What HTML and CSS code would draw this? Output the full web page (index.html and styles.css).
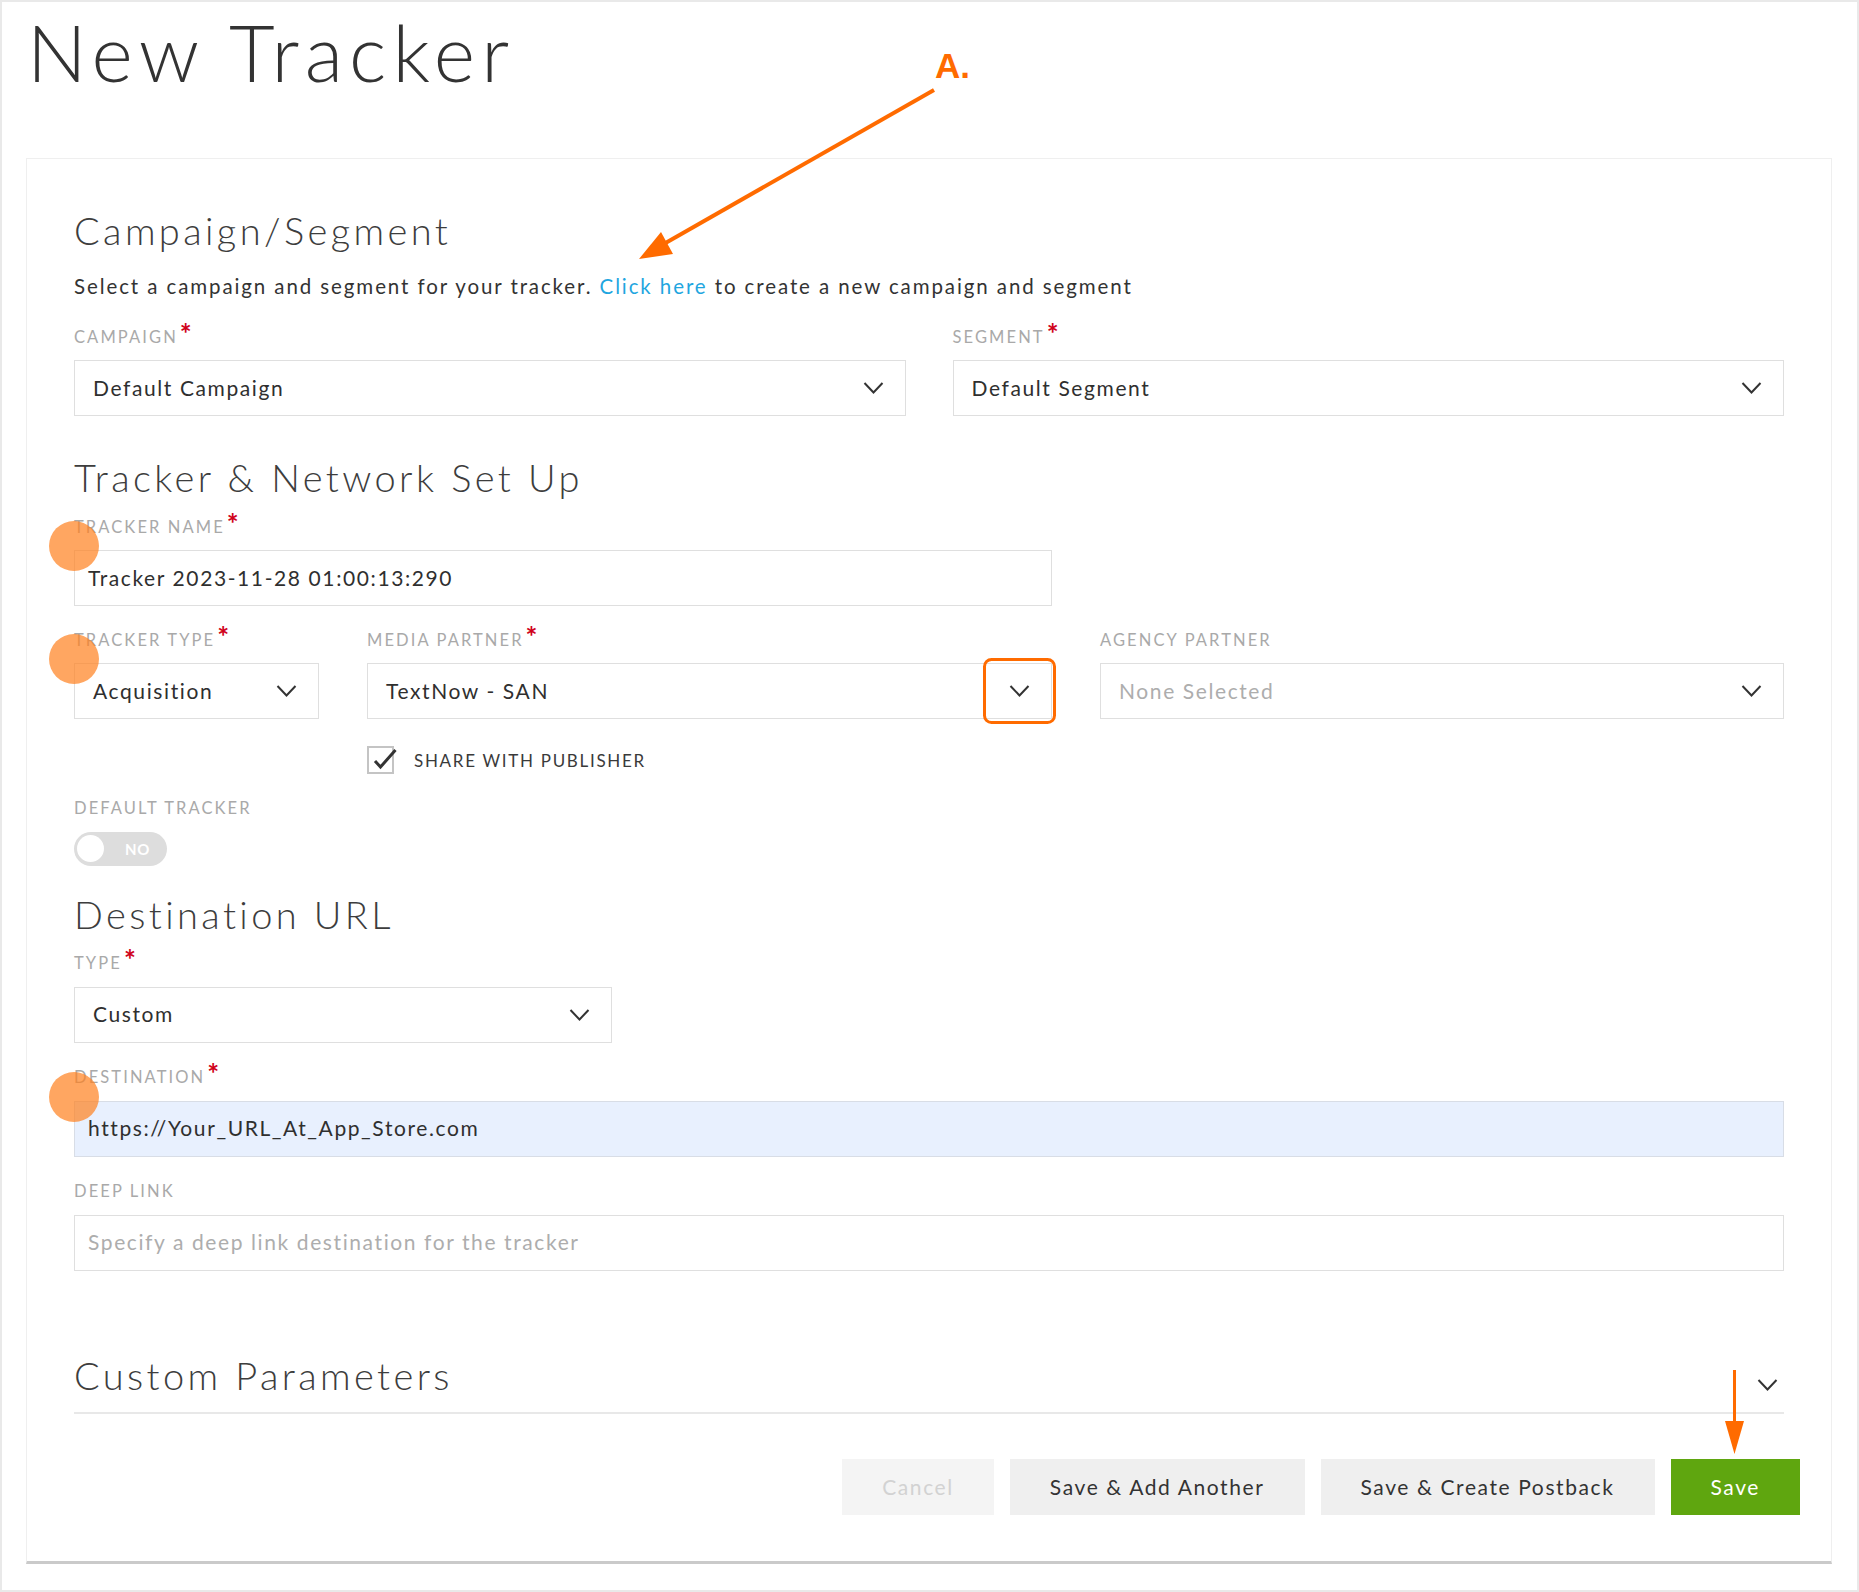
FILE: index.html
```html
<!DOCTYPE html>
<html lang="en">
<head>
<meta charset="utf-8">
<title>New Tracker</title>
<link rel="stylesheet" href="styles.css">
</head>
<body>
<div class="frame">
  <h1 class="page-title">New Tracker</h1>
  <div class="card">
    <section class="sec">
      <h2 class="sec-title">Campaign/Segment</h2>
      <p class="sec-desc">Select a campaign and segment for your tracker. <a href="#" class="link">Click here</a> to create a new campaign and segment</p>
      <div class="row-two">
        <div class="field">
          <div class="lbl">Campaign<span class="req">*</span></div>
          <div class="select"><span class="val">Default Campaign</span><svg class="chev" viewBox="0 0 20 12"><polyline points="1,1 10,10.5 19,1"/></svg></div>
        </div>
        <div class="field">
          <div class="lbl">Segment<span class="req">*</span></div>
          <div class="select"><span class="val">Default Segment</span><svg class="chev" viewBox="0 0 20 12"><polyline points="1,1 10,10.5 19,1"/></svg></div>
        </div>
      </div>
    </section>

    <section class="sec sec-tracker">
      <h2 class="sec-title">Tracker &amp; Network Set Up</h2>
      <div class="field field-name">
        <div class="lbl">Tracker Name<span class="req">*</span></div>
        <div class="input"><span class="val">Tracker 2023-11-28 01:00:13:290</span></div>
      </div>
      <div class="grid3">
        <div class="field">
          <div class="lbl">Tracker Type<span class="req">*</span></div>
          <div class="select"><span class="val">Acquisition</span><svg class="chev" viewBox="0 0 20 12"><polyline points="1,1 10,10.5 19,1"/></svg></div>
        </div>
        <div class="field">
          <div class="lbl">Media Partner<span class="req">*</span></div>
          <div class="select"><span class="val">TextNow - SAN</span><svg class="chev" viewBox="0 0 20 12"><polyline points="1,1 10,10.5 19,1"/></svg></div>
        </div>
        <div class="field">
          <div class="lbl">Agency Partner</div>
          <div class="select"><span class="val placeholder">None Selected</span><svg class="chev" viewBox="0 0 20 12"><polyline points="1,1 10,10.5 19,1"/></svg></div>
        </div>
      </div>
      <div class="share-row">
        <span class="checkbox"><svg class="check" viewBox="0 0 30 28"><polyline points="8,15 13.5,21 28.5,4"/></svg></span>
        <span class="share-text">Share with publisher</span>
      </div>
      <div class="field field-default">
        <div class="lbl">Default Tracker</div>
        <div class="toggle"><span class="knob"></span><span class="toggle-text">NO</span></div>
      </div>
    </section>

    <section class="sec sec-dest">
      <h2 class="sec-title">Destination URL</h2>
      <div class="field field-type">
        <div class="lbl">Type<span class="req">*</span></div>
        <div class="select"><span class="val">Custom</span><svg class="chev" viewBox="0 0 20 12"><polyline points="1,1 10,10.5 19,1"/></svg></div>
      </div>
      <div class="field field-gap">
        <div class="lbl">Destination<span class="req">*</span></div>
        <div class="input autofill"><span class="val">https://Your_URL_At_App_Store.com</span></div>
      </div>
      <div class="field field-gap">
        <div class="lbl">Deep Link</div>
        <div class="input"><span class="val placeholder">Specify a deep link destination for the tracker</span></div>
      </div>
    </section>

    <section class="sec sec-custom">
      <div class="custom-head">
        <h2 class="sec-title">Custom Parameters</h2>
        <svg class="chev chev-small" viewBox="0 0 20 12"><polyline points="1,1 10,10.5 19,1"/></svg>
      </div>
    </section>

    <div class="actions">
      <button class="btn btn-cancel" type="button">Cancel</button>
      <button class="btn" type="button">Save &amp; Add Another</button>
      <button class="btn" type="button">Save &amp; Create Postback</button>
      <button class="btn btn-save" type="button">Save</button>
    </div>
  </div>
</div>

<svg class="overlay" width="1859" height="1592" viewBox="0 0 1859 1592">
  <circle class="dot" cx="74" cy="546" r="25"/>
  <circle class="dot" cx="74" cy="659" r="25"/>
  <circle class="dot" cx="74" cy="1097" r="25"/>
  <rect class="hl" x="984.5" y="659.5" width="70" height="63" rx="7" ry="7"/>
  <line class="arrow-line" x1="934" y1="90" x2="662" y2="245"/>
  <polygon class="arrow-head" points="639,259 661,232 673,254"/>
  <line class="arrow-line thin" x1="1734.5" y1="1370" x2="1734.5" y2="1426"/>
  <polygon class="arrow-head" points="1734.5,1454 1725,1421 1744,1421"/>
</svg>
<div class="annot-label">A.</div>
</body>
</html>
```

FILE: styles.css
```css
html, body {
  margin: 0;
  padding: 0;
}
body {
  position: relative;
  font-family: Lato, "Open Sans", sans-serif;
  color: #333;
  background: #fff;
}
.frame {
  width: 1859px;
  height: 1592px;
  box-sizing: border-box;
  border: 2px solid #e9e9e9;
  padding: 5px 25px 0 24px;
}
.page-title {
  margin: 0 0 61px 1px;
  font-size: 79px;
  line-height: 90px;
  font-weight: 300;
  color: #333;
  letter-spacing: 6.2px;
}
.card {
  border: 1px solid #efefef;
  border-bottom: 3px solid #cacaca;
  padding: 48px 47px 46px 47px;
}
.sec-title {
  margin: 0;
  font-size: 38px;
  line-height: 46px;
  font-weight: 300;
  color: #3d3d3d;
  letter-spacing: 3.4px;
}
.sec-desc {
  margin: 21px 0 0 0;
  font-size: 20.5px;
  line-height: 24px;
  letter-spacing: 1.9px;
  color: #333;
}
.link {
  color: #1fa6df;
  text-decoration: none;
}
.row-two {
  display: grid;
  grid-template-columns: 1fr 1fr;
  column-gap: 47px;
  margin-top: 28.5px;
}
.lbl {
  font-size: 16.5px;
  line-height: 20px;
  text-transform: uppercase;
  color: #a9a9a9;
  letter-spacing: 2.1px;
  margin-bottom: 13.5px;
  white-space: nowrap;
}
.req {
  color: #d0021b;
  font-size: 28px;
  font-weight: 700;
  line-height: 0;
  margin-left: 2px;
  letter-spacing: 0;
  position: relative;
  top: 1px;
}
.select, .input {
  box-sizing: border-box;
  height: 56px;
  border: 1px solid #dfdfdf;
  display: flex;
  align-items: center;
  font-size: 21px;
  letter-spacing: 1.6px;
  color: #2f2f2f;
  background: #fff;
}
.val {
  margin-bottom: 2px;
}
.select {
  padding: 0 21px 0 18px;
  justify-content: space-between;
}
.input {
  padding: 0 13px;
}
.input.autofill {
  background: #e8f0fe;
  border-color: #d8dde6;
}
.placeholder {
  color: #adadad;
}
.chev {
  width: 21px;
  height: 12px;
  flex: none;
}
.chev polyline {
  fill: none;
  stroke: #333;
  stroke-width: 2;
}
.sec-tracker {
  margin-top: 38px;
}
.sec-tracker .sec-title,
.sec-dest .sec-title {
  margin-bottom: 16.5px;
}
.field-name {
  width: 978px;
}
.grid3 {
  display: grid;
  grid-template-columns: 245px 685px 1fr;
  column-gap: 48px;
  margin-top: 23.5px;
}
.share-row {
  display: flex;
  align-items: center;
  margin: 27px 0 0 293px;
  height: 28px;
}
.checkbox {
  position: relative;
  box-sizing: border-box;
  width: 27px;
  height: 28px;
  border: 2px solid #c4c4c4;
  background: #fff;
}
.check {
  position: absolute;
  left: -2px;
  top: -2px;
  width: 30px;
  height: 28px;
  overflow: visible;
}
.check polyline {
  fill: none;
  stroke: #333;
  stroke-width: 3;
}
.share-text {
  margin-left: 20px;
  font-size: 17px;
  text-transform: uppercase;
  letter-spacing: 1.7px;
  color: #3a3a3a;
}
.field-default {
  margin-top: 24.3px;
}
.toggle {
  box-sizing: border-box;
  width: 93px;
  height: 34px;
  border-radius: 17px;
  background: #dddddd;
  display: flex;
  align-items: center;
  padding: 0 3px;
}
.knob {
  width: 27px;
  height: 27px;
  border-radius: 50%;
  background: #fff;
}
.toggle-text {
  margin-left: 21px;
  font-size: 15px;
  font-weight: 700;
  color: #fff;
  letter-spacing: 0.8px;
}
.sec-dest {
  margin-top: 25px;
}
.field-type {
  width: 538px;
}
.field-gap {
  margin-top: 24.5px;
}
.sec-custom {
  margin-top: 81.7px;
}
.custom-head {
  display: flex;
  justify-content: space-between;
  align-items: center;
  padding-bottom: 13.5px;
  border-bottom: 2px solid #e8e8e8;
}
.chev-small {
  width: 21px;
  height: 12px;
  margin: 19px 6px 0 0;
}
.actions {
  display: flex;
  justify-content: flex-end;
  gap: 16px;
  margin: 45px -16px 0 0;
}
.btn {
  height: 56px;
  padding: 0 40px;
  border: none;
  background: #efefef;
  font-family: Lato, "Open Sans", sans-serif;
  font-size: 21px;
  letter-spacing: 1.6px;
  color: #333;
}
.btn-cancel {
  background: #f4f4f4;
  color: #d2d2d2;
}
.btn-save {
  background: #5fa60f;
  color: #fff;
}
.overlay {
  position: absolute;
  left: 0;
  top: 0;
  pointer-events: none;
}
.dot {
  fill: rgba(255, 128, 30, 0.7);
}
.hl {
  fill: none;
  stroke: #ff6b00;
  stroke-width: 3;
}
.arrow-line {
  stroke: #ff6b00;
  stroke-width: 4;
}
.arrow-line.thin {
  stroke-width: 3;
}
.arrow-head {
  fill: #ff6b00;
}
.annot-label {
  position: absolute;
  left: 935px;
  top: 48px;
  font-family: "Liberation Sans", Arial, sans-serif;
  font-weight: 700;
  font-size: 35px;
  line-height: 35px;
  color: #ff6b00;
}
```
